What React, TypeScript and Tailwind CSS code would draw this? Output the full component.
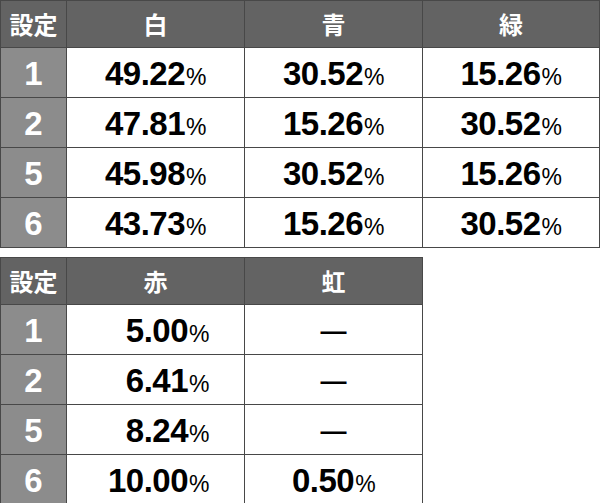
const rows1 = [
  { s: "1", w: "49.22", b: "30.52", g: "15.26" },
  { s: "2", w: "47.81", b: "15.26", g: "30.52" },
  { s: "5", w: "45.98", b: "30.52", g: "15.26" },
  { s: "6", w: "43.73", b: "15.26", g: "30.52" },
];

const rows2 = [
  { s: "1", r: "5.00", n: null },
  { s: "2", r: "6.41", n: null },
  { s: "5", r: "8.24", n: null },
  { s: "6", r: "10.00", n: "0.50" },
];

const jp = { fontFamily: '"Noto Sans CJK JP", "Noto Sans", sans-serif' };
const num = { fontFamily: '"Liberation Sans", Arial, sans-serif' };

function Pct({ v }: { v: string }) {
  return (
    <span style={num} className="font-bold text-[33px] leading-none tracking-[-0.5px] text-black">
      {v}
      <span className="font-normal text-[23px] ml-[1px]">%</span>
    </span>
  );
}

function Head({ children }: { children: React.ReactNode }) {
  return (
    <th
      style={jp}
      className="h-[47px] p-0 leading-none border border-[#484848] bg-[#636363] text-center text-[24px] font-bold text-white"
    >
      {children}
    </th>
  );
}

function Setting({ v }: { v: string }) {
  return (
    <td
      style={num}
      className="h-[50px] p-0 pt-[2px] leading-none border border-[#484848] bg-[#8c8c8c] text-center text-[33px] font-bold text-white"
    >
      {v}
    </td>
  );
}

const cell = "p-0 pt-[2px] leading-none border border-[#484848]";

export default function App() {
  return (
    <div className="w-[600px] h-[503px] bg-white">
      <table className="table-fixed border-collapse w-[599px]">
        <colgroup>
          <col className="w-[66px]" />
          <col className="w-[178px]" />
          <col className="w-[178px]" />
          <col className="w-[177px]" />
        </colgroup>
        <thead>
          <tr>
            <Head>設定</Head>
            <Head>白</Head>
            <Head>青</Head>
            <Head>緑</Head>
          </tr>
        </thead>
        <tbody>
          {rows1.map((r) => (
            <tr key={r.s}>
              <Setting v={r.s} />
              <td className={`${cell} text-center`}>
                <Pct v={r.w} />
              </td>
              <td className={`${cell} text-center`}>
                <Pct v={r.b} />
              </td>
              <td className={`${cell} text-center`}>
                <Pct v={r.g} />
              </td>
            </tr>
          ))}
        </tbody>
      </table>

      <table className="table-fixed border-collapse w-[422px] mt-[9px]">
        <colgroup>
          <col className="w-[66px]" />
          <col className="w-[178px]" />
          <col className="w-[178px]" />
        </colgroup>
        <thead>
          <tr>
            <Head>設定</Head>
            <Head>赤</Head>
            <Head>虹</Head>
          </tr>
        </thead>
        <tbody>
          {rows2.map((r) => (
            <tr key={r.s}>
              <Setting v={r.s} />
              <td className={`${cell} text-right pr-[35px]`}>
                <Pct v={r.r} />
              </td>
              <td className={`${cell} text-center`}>
                {r.n ? (
                  <Pct v={r.n} />
                ) : (
                  <span style={num} className="text-[26px] font-bold text-black">
                    —
                  </span>
                )}
              </td>
            </tr>
          ))}
        </tbody>
      </table>
    </div>
  );
}
